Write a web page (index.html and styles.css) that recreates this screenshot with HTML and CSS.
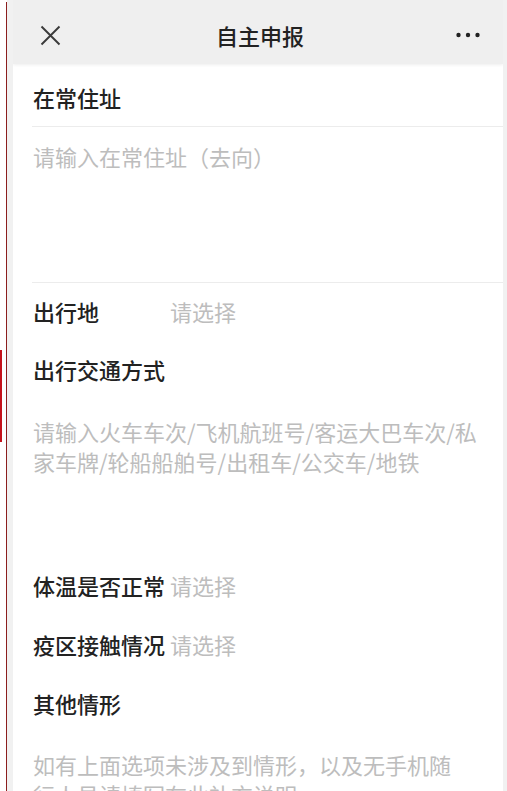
FILE: index.html
```html
<!DOCTYPE html>
<html>
	<head>
		<meta charset="utf-8" />
		<meta name="viewport" content="width=device-width, initial-scale=1.0" />
		<title>自主申报</title>
		<link rel="stylesheet" href="styles.css">
	</head>
	<body>
        <div class="page">
            <div class="gutter">
                <div class="marker"></div>
            </div>
            <div class="rule"></div>
            <div class="side"></div>

            <div class="screen">
                <header class="top-bar">
                    <span class="close-btn">
                        <svg width="21" height="21" viewBox="0 0 21 21">
                            <path d="M1.5 1.5 L19.5 19.5 M19.5 1.5 L1.5 19.5" stroke="#3a3a3a" stroke-width="1.9" fill="none" />
                        </svg>
                    </span>
                    <h1 class="title">自主申报</h1>
                    <span class="more-btn">
                        <svg width="24" height="6" viewBox="0 0 24 6">
                            <circle cx="2.5" cy="3" r="2.2" fill="#222" />
                            <circle cx="12" cy="3" r="2.2" fill="#222" />
                            <circle cx="21.5" cy="3" r="2.2" fill="#222" />
                        </svg>
                    </span>
                </header>

                <form class="form">
                    <div class="field-title first">在常住址</div>
                    <div class="area area-address">
                        <p class="placeholder">请输入在常住址（去向）</p>
                    </div>

                    <div class="field-row short">
                        <span class="label">出行地</span>
                        <span class="value">请选择</span>
                    </div>
                    <div class="field-title">出行交通方式</div>
                    <div class="area area-transport">
                        <p class="placeholder">请输入火车车次/飞机航班号/客运大巴车次/私<br>家车牌/轮船船舶号/出租车/公交车/地铁</p>
                    </div>

                    <div class="field-row">
                        <span class="label">体温是否正常</span>
                        <span class="value">请选择</span>
                    </div>
                    <div class="field-row">
                        <span class="label">疫区接触情况</span>
                        <span class="value">请选择</span>
                    </div>
                    <div class="field-title">其他情形</div>
                    <div class="area area-other">
                        <p class="placeholder">如有上面选项未涉及到情形，以及无手机随<br>行人员请填写在此补充说明</p>
                    </div>
                </form>
            </div>

            <div class="side side-right"></div>
        </div>
	</body>
</html>
```

FILE: styles.css
```css
:root {
    --font-family: "Noto Sans CJK SC", "Noto Sans", sans-serif;
    --edge-grey: #f1f1f1;
    --text: #222;
    --hint: #bdbdbd;
}

body {
    margin: 0;
    padding: 0;
    overflow: hidden;
    width: 100vw;
    height: 100vh;
    font-family: var(--font-family);
    background-color: #fff;
    color: var(--text);
}

.page {
    display: flex;
    flex-direction: row;
    height: 100vh;
}

.gutter {
    width: 6px;
}

.marker {
    margin-top: 350px;
    width: 2px;
    height: 92px;
    background-color: #c4121b;
}

.rule {
    width: 1px;
    margin-top: 2px;
    background-color: #8b1e1e;
}

.side {
    width: 6px;
    background-color: var(--edge-grey);
}

.side-right {
    width: 4px;
}

.screen {
    flex: 1;
    display: flex;
    flex-direction: column;
    overflow: hidden;
    background-color: #fff;
}

/* top bar */
.top-bar {
    display: grid;
    grid-template-columns: 1fr auto 1fr;
    align-items: center;
    flex-shrink: 0;
    height: 64px;
    box-sizing: border-box;
    padding: 6px 23px 0 27px;
    background-color: #efefef;
    box-shadow: 0 1px 3px rgba(0, 0, 0, 0.07);
}

.close-btn,
.more-btn {
    display: flex;
    align-items: center;
}

.more-btn {
    justify-content: flex-end;
}

.title {
    margin: 0;
    font-size: 22px;
    font-weight: 500;
    color: #222;
    line-height: 30px;
}

/* form */
.form {
    flex-shrink: 0;
    padding-left: 19px;
    font-size: 22px;
}

.field-title,
.field-row {
    padding-left: 1px;
    height: 59px;
    line-height: 59px;
    font-weight: 500;
    color: var(--text);
}

.field-title.first {
    height: 58px;
    line-height: 58px;
    padding-top: 4px;
    border-bottom: 1px solid #ececec;
}

.field-row {
    display: flex;
    flex-direction: row;
}

.field-row.short {
    height: 57px;
    line-height: 57px;
}

.label {
    width: 137px;
    flex-shrink: 0;
}

.value {
    font-weight: 400;
    color: var(--hint);
}

.area {
    padding-left: 1px;
    box-sizing: border-box;
}

.area-address {
    height: 156px;
    padding-top: 14px;
    border-bottom: 1px solid #ececec;
}

.area-transport {
    height: 157px;
    padding-top: 17px;
}

.area-other {
    padding-top: 16px;
}

.placeholder {
    margin: 0;
    line-height: 30px;
    color: var(--hint);
    white-space: nowrap;
}
```
